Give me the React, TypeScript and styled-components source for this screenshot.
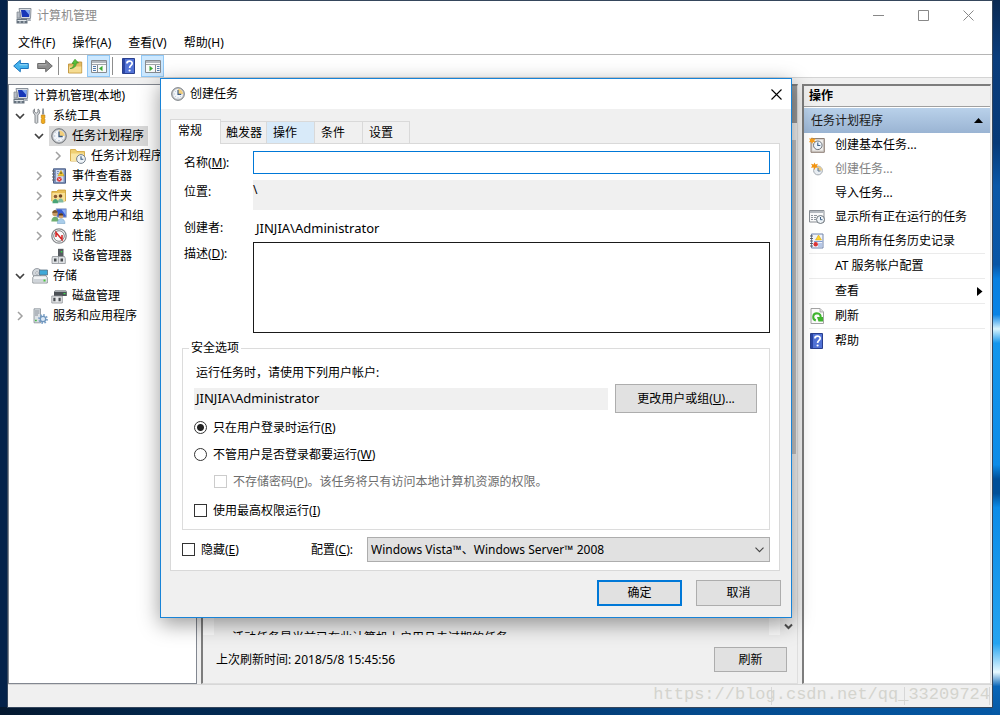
import React, { useState } from "react";
import styled, { createGlobalStyle, css } from "styled-components";

const GlobalStyle = createGlobalStyle`
  * { box-sizing: border-box; }
  body {
    margin: 0;
    font-family: "Noto Sans", "Noto Sans CJK SC", sans-serif;
    font-size: 12px;
    line-height: 16px;
    color: #000;
  }
  button, input, textarea, select {
    font: inherit;
    color: inherit;
    margin: 0;
    padding: 0;
    border-radius: 0;
    outline: none;
  }
  svg { display: block; flex: none; }
`;

/* ---------- desktop and main window ---------- */

const Desktop = styled.div`
  position: relative;
  display: flex;
  min-height: 100vh;
  padding: 1px 8px 8px;
  overflow: hidden;
  background:
    linear-gradient(#0b2a52 0%, #0a3d7c 8%, #073a78 20%, #0b58a8 26%, #0a56a6 37%, #0a80e0 39%, #0a84e6 44%,
      #d8f4fc 46%, #1496ec 48%, #0c8ce8 65%, #004f98 67%, #004f98 69%, #0c8ce8 71%, #25a4f0 90%, #e8faff 94%, #0a66b8 96%, #0558a4 100%)
      right top / 8px 100% no-repeat,
    linear-gradient(90deg, #04182f 0%, #02284f 18%, #032f5e 45%, #044a8c 70%, #0558a4 100%) left bottom / 100% 8px no-repeat,
    #04224a;
`;

const MainWindow = styled.main`
  display: flex;
  flex: 1;
  flex-direction: column;
  min-width: 0;
  background: #f0f0f0;
  box-shadow: 0 0 0 1px #35465c;
`;

const TitleBar = styled.header`
  display: flex;
  align-items: center;
  height: 29px;
  padding-left: 8px;
  gap: 5px;
  background: #fff;
  color: #8b8b8b;
`;

const Title = styled.h1`
  flex: 1;
  margin: 0;
  font-size: 12px;
  font-weight: 400;
`;

const CaptionButton = styled.button<{ $width?: number }>`
  display: flex;
  align-items: center;
  justify-content: center;
  width: ${(p) => p.$width ?? 40}px;
  height: 29px;
  border: 0;
  background: transparent;
`;

const CaptionButtons = styled.div`
  display: flex;
  gap: 5px;
  padding-right: 4px;
`;

const MenuBar = styled.nav`
  display: flex;
  gap: 17px;
  height: 25px;
  padding: 2px 10px 0;
  background: #fff;
  border-bottom: 1px solid #b5b5b5;
`;

const MenuButton = styled.button`
  border: 0;
  background: transparent;
`;

const Toolbar = styled.div`
  display: flex;
  align-items: center;
  gap: 1px;
  height: 23px;
  padding-left: 1px;
  background: #fff;
  border-bottom: 1px solid #d4d4d4;
`;

const ToolButton = styled.button<{ $active?: boolean }>`
  display: flex;
  align-items: center;
  justify-content: center;
  width: 23px;
  height: 22px;
  border: 1px solid ${(p) => (p.$active ? "#90c8f6" : "transparent")};
  background: ${(p) => (p.$active ? "#cce8ff" : "transparent")};
`;

const ToolSeparator = styled.span`
  width: 1px;
  height: 18px;
  margin: 0 3px 0 1px;
  background: #8d8d8d;
`;

const Workspace = styled.div`
  display: flex;
  flex: 1;
  min-height: 0;
  padding: 6px 1px 0 0;
  gap: 4px;
`;

const StatusBar = styled.footer`
  position: relative;
  display: flex;
  justify-content: flex-end;
  height: 23px;
  padding: 2px 2px 2px 0;
  border-top: 1px solid #d7d7d7;
`;

const StatusCell = styled.span<{ $width: number }>`
  width: ${(p) => p.$width}px;
  border-right: 1px solid #d7d7d7;
`;

const Watermark = styled.span`
  position: absolute;
  right: 2px;
  top: 0;
  font-family: "Liberation Mono", monospace;
  font-size: 17px;
  line-height: 20px;
  color: #d4d4ce;
`;

/* ---------- console tree ---------- */

const TreePane = styled.aside`
  width: 189px;
  overflow: hidden;
  padding-top: 1px;
  background: #fff;
  border: 1px solid #828790;
`;

const TreeList = styled.ul`
  margin: 0;
  padding: 0;
  list-style: none;
`;

const TreeRow = styled.li<{ $level: number }>`
  display: flex;
  align-items: center;
  height: 20px;
  padding-left: ${(p) => (p.$level === 0 ? 4 : p.$level * 19 - 14)}px;
  white-space: nowrap;
`;

const Twisty = styled.span`
  display: flex;
  justify-content: center;
  width: 12px;
  margin-right: 6px;
`;

const TreeLabel = styled.span<{ $selected?: boolean }>`
  display: flex;
  align-items: center;
  gap: 5px;
  height: 20px;
  padding: 0 4px 0 2px;
  margin-left: -2px;
  background: ${(p) => (p.$selected ? "#d9d9d9" : "transparent")};
`;

/* ---------- middle pane ---------- */

const sunken = css`
  border: solid;
  border-width: 2px 1px 1px 2px;
  border-color: #7d7d7d #dedede #dedede #7d7d7d;
`;

const SummaryPane = styled.section`
  ${sunken}
  display: flex;
  flex: 1;
  flex-direction: column;
  min-width: 0;
`;

const SummaryHeader = styled.div`
  height: 37px;
  background: #999;
`;

const SummaryScroller = styled.div`
  display: flex;
  flex: 1;
  min-height: 0;
`;

const SummaryCard = styled.div`
  display: flex;
  flex: 1;
  flex-direction: column;
  justify-content: flex-end;
  min-width: 0;
  padding: 0 0 0 18px;
  border: solid #fbfbfb;
  border-width: 0 11px;
`;

const CutLine = styled.p`
  height: 4px;
  margin: 0;
  overflow: hidden;
  line-height: 14px;
  white-space: nowrap;
`;

const ScrollTrack = styled.div`
  display: flex;
  flex-direction: column;
  align-items: center;
  width: 17px;
  padding: 17px 0 4px;
`;

const ScrollThumb = styled.div`
  width: 14px;
  height: 64%;
  margin-bottom: auto;
  background: #c4c4c4;
`;

const SummaryFooter = styled.div`
  display: flex;
  align-items: center;
  justify-content: space-between;
  height: 48px;
  padding: 1px 10px 0 13px;
`;

/* ---------- actions pane ---------- */

const ActionsPane = styled.aside`
  ${sunken}
  width: 189px;
  background: #fff;
`;

const ActionsTitle = styled.h2`
  height: 21px;
  margin: 0 0 1px;
  padding-left: 5px;
  font-size: 12px;
  font-weight: 600;
  line-height: 20px;
  background: #f0f0f0;
  border-bottom: 1px solid #a0a0a0;
`;

const ActionsGroup = styled.h3`
  display: flex;
  align-items: center;
  justify-content: space-between;
  height: 25px;
  margin: 0;
  padding: 0 7px;
  font-size: 12px;
  font-weight: 400;
  color: #1a1a1a;
  background: linear-gradient(#b9d1ea, #9ab4d3);
`;

const ActionsList = styled.ul`
  margin: 0;
  padding: 0 5px;
  list-style: none;
`;

const ActionItem = styled.li<{ $ruled?: boolean }>`
  border-bottom: ${(p) => (p.$ruled ? "1px solid #ebebeb" : "0")};
`;

const ActionButton = styled.button`
  display: flex;
  align-items: center;
  width: 100%;
  height: 24px;
  border: 0;
  background: transparent;
  text-align: left;
  white-space: nowrap;
  &:disabled { color: #838383; }
`;

const ActionIcon = styled.span`
  width: 26px;
`;

const ActionText = styled.span`
  flex: 1;
`;

/* ---------- dialog ---------- */

const Dialog = styled.section`
  position: absolute;
  top: 78px;
  left: 160px;
  right: 208px;
  background: #f0f0f0;
  border: 1px solid #1883d7;
  box-shadow: 0 6px 20px rgba(0, 0, 0, 0.4);
`;

const DialogTitleBar = styled.header`
  display: flex;
  align-items: center;
  gap: 5px;
  height: 30px;
  padding-left: 10px;
  background: #fff;
`;

const DialogBody = styled.form`
  padding: 10px 10px 11px 9px;
`;

const TabList = styled.div`
  display: flex;
  align-items: flex-end;
  height: 24px;
`;

const Tab = styled.button<{ $width: number; $hot?: boolean }>`
  width: ${(p) => p.$width}px;
  height: 22px;
  padding: 0 0 0 ${(p) => (p.$width > 46 ? 6 : 5)}px;
  border: solid #d9d9d9;
  border-width: 1px 1px 0 0;
  background: ${(p) => (p.$hot ? "#d8eaf9" : "#f0f0f0")};
  text-align: left;
  white-space: nowrap;
  &[aria-selected="true"] {
    height: 25px;
    margin-bottom: -1px;
    padding: 0 0 2px 7px;
    border-left-width: 1px;
    background: #fff;
  }
`;

const TabPanel = styled.div`
  margin-right: 1px;
  padding: 7px 9px 8px 11px;
  background: #fff;
  border: 1px solid #d9d9d9;
`;

const Fields = styled.div`
  display: grid;
  grid-template-columns: 69px 1fr;
  gap: 6px 0;
  padding-left: 2px;
`;

const FieldLabel = styled.label`
  padding-top: 4px;
`;

const NameInput = styled.input`
  height: 23px;
  padding: 0 3px;
  border: 1px solid #0078d7;
  background: #fff;
`;

const ReadonlyBox = styled.output`
  height: 30px;
  padding: 2px 0;
  background: #f0f0f0;
`;

const CreatorText = styled.output`
  height: 20px;
  padding: 4px 3px 0;
  font-size: 13px;
`;

const DescriptionArea = styled.textarea`
  display: block;
  height: 91px;
  padding: 3px;
  border: 1px solid #1a1a1a;
  background: #fff;
  resize: none;
`;

const SecurityGroup = styled.fieldset`
  min-width: 0;
  margin: 7px 0;
  padding: 9px 12px 5px 11px;
  border: 1px solid #dcdcdc;
`;

const GroupLegend = styled.legend`
  margin-left: -5px;
  padding: 0 2px;
`;

const GroupText = styled.p`
  margin: 0;
  padding-left: 2px;
`;

const AccountRow = styled.div`
  display: flex;
  align-items: center;
  gap: 7px;
  margin: 3px 0 1px;
`;

const AccountBox = styled.output`
  flex: 1;
  height: 22px;
  padding: 2px 2px;
  font-size: 13px;
  background: #f0f0f0;
`;

const PushButton = styled.button<{ $width: number; $height: number; $primary?: boolean }>`
  width: ${(p) => p.$width}px;
  height: ${(p) => p.$height}px;
  border: ${(p) => (p.$primary ? "2px solid #0078d7" : "1px solid #adadad")};
  background: #e1e1e1;
  white-space: nowrap;
`;

const Choice = styled.label<{ $nested?: boolean; $muted?: boolean }>`
  display: flex;
  align-items: center;
  gap: 6px;
  height: 27px;
  padding-left: ${(p) => (p.$nested ? 20 : 0)}px;
  color: ${(p) => (p.$muted ? "#6d6d6d" : "#000")};
  white-space: nowrap;
`;

const LastChoice = styled(Choice)`
  margin-top: 2px;
`;

const HideChoice = styled(Choice)`
  height: 25px;
`;

const Radio = styled.input.attrs({ type: "radio" })`
  appearance: none;
  width: 13px;
  height: 13px;
  border: 1px solid #333;
  border-radius: 50%;
  background: #fff;
  &:checked { background: radial-gradient(circle, #222 0 3px, #fff 4px); }
`;

const CheckBox = styled.input.attrs({ type: "checkbox" })`
  appearance: none;
  width: 13px;
  height: 13px;
  border: 1px solid #333;
  background: #fff;
  &:disabled { border-color: #ccc; }
  &:checked { background: linear-gradient(#333, #333) center / 7px 7px no-repeat; }
`;

const ConfigureRow = styled.div`
  display: grid;
  grid-template-columns: 129px 56px 1fr;
  align-items: center;
`;

const SelectFrame = styled.div`
  display: grid;
  grid-template-columns: 1fr 15px;
  align-items: center;
`;

const ConfigSelect = styled.select`
  grid-area: 1 / 1 / 2 / 3;
  width: 100%;
  height: 25px;
  padding: 0 20px 0 3px;
  appearance: none;
  border: 1px solid #adadad;
  background: #e1e1e1;
`;

const SelectArrow = styled.span`
  grid-area: 1 / 2;
  pointer-events: none;
`;

const DialogButtons = styled.div`
  display: flex;
  justify-content: flex-end;
  gap: 14px;
  padding-top: 9px;
`;

/* ---------- icons ---------- */

const Icon = ({ size = 16, children }: { size?: number; children: React.ReactNode }) => (
  <svg width={size} height={size} viewBox="0 0 16 16" aria-hidden="true">{children}</svg>
);

const ComputerIcon = () => (
  <Icon>
    <path d="M3 .5h12l-.5 10H5z" fill="#d9dde2" stroke="#8a929c" />
    <path d="M5 2h8.6l-.4 7H6z" fill="#1737b8" />
    <path d="M9 2h4.6l-.3 5z" fill="#7fa8f0" />
    <path d="M1 4h3v6H1z" fill="#b8bec6" stroke="#7d858e" strokeWidth=".7" />
    <path d="M.5 10.5h11v5H.5z" fill="#66727e" />
    <path d="M1.500 12h9v1h-9z" fill="#e3e8ec" />
    <path d="M3 13.500h2v1H3zM7 13.500h2v1H7z" fill="#c9d2da" />
    <path d="M12 11h2.500l.5 2h-3z" fill="#a8afb8" />
  </Icon>
);

const ClockIcon = ({ size = 16 }: { size?: number }) => (
  <Icon size={size}>
    <circle cx="8" cy="8" r="7.300" fill="#b9bcc0" stroke="#74787d" strokeWidth="1" />
    <circle cx="8" cy="8" r="5.700" fill="#f3f6fa" stroke="#dfe3e7" strokeWidth=".6" />
    <path d="M8 8V2.300A5.700 5.700 0 0 1 13.700 8z" fill="#f2cf7c" />
    <path d="M8 3.500V8.500h3.700" fill="none" stroke="#3c5b80" strokeWidth="1.300" />
    <path d="M3.200 8h1M8 12v1M4.600 4.600l.6.6M4.600 11.400l.6-.6M11.400 11.400l-.6-.6" stroke="#7d94ad" strokeWidth=".8" />
  </Icon>
);

const ToolsIcon = () => (
  <Icon>
    <path d="M2.500 1v3l1.700 1.200L6 4V1c1.500.7 2 2.300 1.500 4L5.800 7v7.500c0 1-2.800 1-2.800 0V7L1.500 5C.9 3.300 1.300 1.700 2.500 1z" fill="#d4d7da" stroke="#7a7f85" strokeWidth=".9" />
    <path d="M10.300.5h1.600l.3 6H10z" fill="#8c9299" />
    <path d="M9.300 7h3.600v3l-.6.700.6.600v3.200c0 1.500-3.600 1.500-3.600 0v-3.200l.6-.6-.6-.7z" fill="#efab1e" stroke="#b9790a" strokeWidth=".6" />
  </Icon>
);

const FolderClockIcon = () => (
  <Icon>
    <path d="M.5 13V1.500h5l1.300 2h7.700V13z" fill="#efcf73" stroke="#cfa238" strokeWidth=".8" />
    <path d="M1 5.500h13V13H1z" fill="#f9e6a6" />
    <circle cx="11" cy="11" r="4.400" fill="#eef3f8" stroke="#74808d" />
    <path d="M11 8.300V11.300h2.300" fill="none" stroke="#35597f" strokeWidth="1.100" />
  </Icon>
);

const EventIcon = () => (
  <Icon>
    <path d="M2.500.8h12v14.400h-12z" fill="#7f93bd" stroke="#4b5f88" />
    <path d="M5 2h7.500v12H5z" fill="#cfdaee" />
    <path d="M6 3.500h2M6 5.500h1.500" stroke="#7f93bd" />
    <path d="M1 3h3M1 6h3M1 9h3M1 12h3" stroke="#666" />
    <path d="M10 2.500l3 5.300H7z" fill="#ffd52e" stroke="#c39308" strokeWidth=".6" />
    <path d="M10 4.200v2" stroke="#222" />
    <circle cx="8.300" cy="11.300" r="2.400" fill="#dc3434" />
    <path d="M7.400 10.400l1.800 1.800M9.200 10.400l-1.800 1.800" stroke="#fff" strokeWidth=".7" />
  </Icon>
);

const SharedIcon = () => (
  <Icon>
    <path d="M.8 13V3.500h5L7 2h7.500v11z" fill="#e9bf55" stroke="#c79a30" strokeWidth=".8" />
    <path d="M1.300 5h12.700v8H1.300z" fill="#f8df94" />
    <circle cx="4.500" cy="8.500" r="1.800" fill="#8b5a34" />
    <circle cx="9.500" cy="8" r="1.800" fill="#6f4423" />
    <path d="M1.500 15.200c0-5.500 5.800-5.500 5.800 0z" fill="#49a477" />
    <path d="M6.800 14.500c0-5.200 5.700-5.200 5.700 0z" fill="#7fb9a0" />
  </Icon>
);

const UsersIcon = () => (
  <Icon>
    <path d="M5 .8h10.300v8.500H6z" fill="#3659cf" stroke="#a8b4c9" />
    <path d="M10.500 1.500h4.300v6z" fill="#8badf3" />
    <circle cx="4" cy="5.500" r="2.700" fill="#c99a62" />
    <path d="M1.300 5c.2-3.800 5.200-3.800 5.300-.3z" fill="#7a552c" />
    <path d="M.3 13.500c0-6.500 7.500-6.500 7.500 0z" fill="#6fae70" />
    <circle cx="10" cy="8" r="2.400" fill="#d9a56d" />
    <path d="M7.600 7.500c.5-3 4.600-3 4.700 0z" fill="#55371b" />
    <path d="M6.300 15.500c0-6.500 7.700-6.500 7.700 0z" fill="#a9cdea" stroke="#6d9cc2" strokeWidth=".5" />
  </Icon>
);

const PerformanceIcon = () => (
  <Icon>
    <circle cx="8" cy="8" r="7.200" fill="#fff" stroke="#85888c" strokeWidth="1.300" />
    <circle cx="8" cy="8" r="5.300" fill="#f9f9f9" stroke="#5f6367" strokeWidth=".8" />
    <path d="M5 9V4.500l6 7V7" fill="none" stroke="#d42222" strokeWidth="1.500" />
  </Icon>
);

const DeviceIcon = () => (
  <Icon>
    <path d="M7 .8h5.500v8H7z" fill="#565b60" />
    <path d="M9.800 3h1.500v1.500H9.800z" fill="#36dd48" />
    <path d="M1.500 8.500h12l.8 2v5H1v-5z" fill="#dfe2e5" stroke="#8d9195" strokeWidth=".8" />
    <path d="M3 10.500h2.500v3H3zM9.500 10.500H12v3H9.500z" fill="#494d51" />
    <path d="M7.500 9v6" stroke="#a9adb1" />
  </Icon>
);

const StorageIcon = () => (
  <Icon>
    <circle cx="5" cy="5" r="4.500" fill="#d2d7dc" stroke="#858c93" strokeWidth=".8" />
    <circle cx="5" cy="5" r="1.300" fill="#fff" stroke="#858c93" strokeWidth=".6" />
    <path d="M7.500 2h8v5h-8z" fill="#3fa8d8" stroke="#5c7183" strokeWidth=".8" />
    <path d="M.8 9.500l1.500-1.800h11.700l1.300 1.800V15H.8z" fill="#f1f3f5" stroke="#767d84" strokeWidth=".8" />
    <path d="M1.500 11h13v3.300h-13z" fill="#cfd4d9" />
    <path d="M11.500 11.500h2v2h-2z" fill="#4bc63e" />
  </Icon>
);

const DiskIcon = () => (
  <Icon>
    <path d="M4 2.500h11l.8 1.500v4H3V4z" fill="#4b5055" />
    <path d="M4.500 2.500h10.500l.5 1.500H3.500z" fill="#a4a9ae" />
    <path d="M12.500 5h2v1.200h-2z" fill="#41dd50" />
    <path d="M.8 8h10.500v7H.8z" fill="#e6e8ea" stroke="#8d9195" strokeWidth=".8" />
    <path d="M2.300 9.800h2.200v3.400H2.300zM7.500 9.800h2.200v3.400H7.500z" fill="#494d51" />
  </Icon>
);

const ServicesIcon = () => (
  <Icon>
    <path d="M2 .8h6.500v14H2z" fill="#dce1e6" stroke="#828a92" strokeWidth=".8" />
    <path d="M3 3h4.500M3 5h4.500M3 7h3" stroke="#7d868f" strokeWidth=".9" />
    <path d="M3 12.500h1.800" stroke="#45b845" strokeWidth="1.300" />
    <circle cx="11" cy="11" r="4" fill="none" stroke="#7ba1c8" strokeWidth="1.800" strokeDasharray="1.600 1.500" />
    <circle cx="11" cy="11" r="2.700" fill="#dbe8f5" stroke="#6e95bd" strokeWidth="1.300" />
  </Icon>
);

const ArrowIcon = ({ forward }: { forward?: boolean }) => (
  <Icon>
    <path
      d={forward ? "M.7 5.500h8V2.200L15.300 8l-6.600 5.800v-3.300h-8z" : "M15.300 5.500h-8V2.200L.7 8l6.600 5.800v-3.300h8z"}
      fill={forward ? "#8e8e8e" : "#45b2ec"}
      stroke={forward ? "#686868" : "#1a74bd"}
    />
    <path d={forward ? "M1.500 6.800h8" : "M6.500 6.800h8"} stroke={forward ? "#b8b8b8" : "#a2dcf8"} />
  </Icon>
);

const FolderUpIcon = () => (
  <Icon>
    <path d="M1.500 15V6h4l1.200-2h8v11z" fill="#e3bb62" stroke="#c0933a" strokeWidth=".9" />
    <path d="M2 8.500h12.300v6H2z" fill="#f5dc92" />
    <path d="M3 10.500c2.500-.5 4-2 4-5H5L8 1.200 11.500 5H9.300c0 3.500-2.300 5.500-6.300 5.500z" fill="#58c03b" stroke="#2f8a20" strokeWidth=".6" />
  </Icon>
);

const PaneIcon = ({ right }: { right?: boolean }) => (
  <Icon>
    <path d="M.5 2.500h15v12H.5z" fill="#fafafa" stroke="#868b91" />
    <path d="M1 3h14v2H1z" fill="#b3b8be" />
    <path d="M1 6.500h14" stroke="#9fa4aa" />
    <path d={right ? "M10.500 7v7" : "M6.500 7v7"} stroke="#868b91" />
    <path d={right ? "M12 8.500h2.500M12 10.500h2.500M12 12.500h2.500" : "M2 8.500h3M2 10.500h3M2 12.500h3"} stroke="#4e79ad" />
    <path d={right ? "M4.500 7.800v5.400L8 10.500z" : "M11.500 7.800v5.400L8 10.500z"} fill="#3bab34" />
  </Icon>
);

const HelpIcon = () => (
  <Icon>
    <path d="M1.500.5h12v15h-12z" fill="#5273d6" stroke="#293f8e" />
    <path d="M2 1h2v14H2z" fill="#2b46a4" />
    <path d="M5.900 5.500C5.900 2.300 11.200 2.300 11.200 5.300c0 2.100-2.600 2.200-2.600 4.700" fill="none" stroke="#fff" strokeWidth="1.700" />
    <circle cx="8.600" cy="12.500" r="1.100" fill="#fff" />
  </Icon>
);

const NewBasicTaskIcon = () => (
  <Icon>
    <path d="M2 1.500h13.300v13.800H2z" fill="#d5d1ce" stroke="#8d7f76" />
    <path d="M3.500 3h10.300v10.500H3.500z" fill="#f3f1ef" />
    <circle cx="8.800" cy="8.300" r="4.300" fill="#eef4fa" stroke="#6d737b" />
    <path d="M8.800 5.500V8.500h2.500" fill="none" stroke="#3d6086" strokeWidth="1.100" />
    <path d="M3 0l.8 1.900L6.500 1.300 5.300 3.400 6.500 5.300 4.100 5 3 7l-.8-2L0 5.300l1.100-2L0 1.300l2.200.6z" fill="#f59d1b" />
  </Icon>
);

const NewTaskIcon = () => (
  <Icon>
    <circle cx="9" cy="9.500" r="4.400" fill="#e8edf2" stroke="#a5abb2" />
    <path d="M9 9.500V5.600A3.900 3.900 0 0 1 12.900 9.500z" fill="#edcb83" />
    <path d="M9 7v3h2.500" fill="none" stroke="#5d7792" />
    <path d="M5.500 1.500l.9 1.900 2.600-.6-1.200 2 1.200 2-2.600-.3-.9 2.500-.9-2.500-2.600.3 1.200-2-1.200-2 2.600.6z" fill="#f39410" />
  </Icon>
);

const RunningTasksIcon = () => (
  <Icon>
    <path d="M.5 1.500h14.500v11.500H.5z" fill="#fafafa" stroke="#8b9096" />
    <path d="M1 2h13.500v2H1z" fill="#b5bac0" />
    <path d="M2 6.500h2M5 6.500h3M2 8.500h2M5 8.500h2M2 10.500h2M5 10.500h2" stroke="#8f969d" />
    <circle cx="11.500" cy="10.500" r="4" fill="#eef3f7" stroke="#6f767d" />
    <path d="M11.500 8v2.700h2" fill="none" stroke="#3d6086" />
  </Icon>
);

const HistoryIcon = () => (
  <Icon>
    <path d="M2.500 1h11.500v14H2.500z" fill="#f0f4fb" stroke="#7286ad" />
    <path d="M1 3h3M1 5.500h3M1 8h3M1 10.500h3M1 13h3" stroke="#555" strokeWidth=".9" />
    <path d="M5 8.500h8.500M9 11h4M9 13h4" stroke="#7d9bd2" />
    <path d="M9.500 2l3 5h-6z" fill="#ffd42c" stroke="#cf9c10" strokeWidth=".5" />
    <circle cx="6.700" cy="11.300" r="2.200" fill="#db3434" />
  </Icon>
);

const RefreshIcon = () => (
  <Icon>
    <path d="M2 .5h9L14.500 4v11.500H2z" fill="#fbfbfb" stroke="#a3a3a3" />
    <path d="M11 .5V4h3.500" fill="#ddd" stroke="#a3a3a3" strokeWidth=".8" />
    <path d="M6.800 12.500C3 11.200 3.400 5.500 7.800 5.300c3.200 0 4.500 2.500 3.700 5" fill="none" stroke="#3fb42e" strokeWidth="2" />
    <path d="M8 9h6v4.500H9.500z" fill="#3fb42e" />
  </Icon>
);

const Chevron = ({ open }: { open?: boolean }) => (
  <svg width="10" height="10" viewBox="0 0 10 10" aria-hidden="true">
    <path
      d={open ? "M1 3l4 4 4-4" : "M3 1l4 4-4 4"}
      fill="none"
      stroke={open ? "#404040" : "#a0a0a0"}
      strokeWidth={open ? 1.7 : 1.5}
    />
  </svg>
);

/* ---------- data ---------- */

type Node = { label: string; level: number; icon: React.ReactNode; state?: "open" | "closed"; selected?: boolean };

const treeNodes: Node[] = [
  { label: "计算机管理(本地)", level: 0, icon: <ComputerIcon /> },
  { label: "系统工具", level: 1, icon: <ToolsIcon />, state: "open" },
  { label: "任务计划程序", level: 2, icon: <ClockIcon />, state: "open", selected: true },
  { label: "任务计划程序库", level: 3, icon: <FolderClockIcon />, state: "closed" },
  { label: "事件查看器", level: 2, icon: <EventIcon />, state: "closed" },
  { label: "共享文件夹", level: 2, icon: <SharedIcon />, state: "closed" },
  { label: "本地用户和组", level: 2, icon: <UsersIcon />, state: "closed" },
  { label: "性能", level: 2, icon: <PerformanceIcon />, state: "closed" },
  { label: "设备管理器", level: 2, icon: <DeviceIcon /> },
  { label: "存储", level: 1, icon: <StorageIcon />, state: "open" },
  { label: "磁盘管理", level: 2, icon: <DiskIcon /> },
  { label: "服务和应用程序", level: 1, icon: <ServicesIcon />, state: "closed" },
];

type Action = { label: string; icon?: React.ReactNode; disabled?: boolean; ruled?: boolean; submenu?: boolean };

const actions: Action[] = [
  { label: "创建基本任务...", icon: <NewBasicTaskIcon /> },
  { label: "创建任务...", icon: <NewTaskIcon />, disabled: true },
  { label: "导入任务..." },
  { label: "显示所有正在运行的任务", icon: <RunningTasksIcon /> },
  { label: "启用所有任务历史记录", icon: <HistoryIcon />, ruled: true },
  { label: "AT 服务帐户配置", ruled: true },
  { label: "查看", ruled: true, submenu: true },
  { label: "刷新", icon: <RefreshIcon />, ruled: true },
  { label: "帮助", icon: <HelpIcon /> },
];

const tabs = [
  { name: "常规", width: 51 },
  { name: "触发器", width: 46 },
  { name: "操作", width: 48 },
  { name: "条件", width: 48 },
  { name: "设置", width: 47 },
];

/* ---------- views ---------- */

const CreateTaskDialog = () => {
  const [tab, setTab] = useState("常规");
  return (
    <Dialog role="dialog" aria-label="创建任务">
      <DialogTitleBar>
        <ClockIcon size={14} />
        <Title as="h2">创建任务</Title>
        <CaptionButton type="button" $width={30} aria-label="关闭">
          <svg width="11" height="11" viewBox="0 0 11 11"><path d="M.5.5l10 10M10.500.5l-10 10" stroke="#000" strokeWidth="1.100" /></svg>
        </CaptionButton>
      </DialogTitleBar>
      <DialogBody onSubmit={(e) => e.preventDefault()}>
        <TabList role="tablist">
          {tabs.map(({ name, width }) => (
            <Tab
              key={name}
              type="button"
              role="tab"
              aria-selected={name === tab}
              $width={width}
              $hot={name === "操作"}
              onClick={() => setTab(name)}
            >
              {name}
            </Tab>
          ))}
        </TabList>
        <TabPanel role="tabpanel">
          <Fields>
            <FieldLabel htmlFor="name">名称(<u>M</u>):</FieldLabel>
            <NameInput id="name" type="text" />
            <FieldLabel htmlFor="location">位置:</FieldLabel>
            <ReadonlyBox id="location">\</ReadonlyBox>
            <FieldLabel htmlFor="creator">创建者:</FieldLabel>
            <CreatorText id="creator">JINJIA\Administrator</CreatorText>
            <FieldLabel htmlFor="description">描述(<u>D</u>):</FieldLabel>
            <DescriptionArea id="description" />
          </Fields>
          <SecurityGroup>
            <GroupLegend>安全选项</GroupLegend>
            <GroupText>运行任务时，请使用下列用户帐户:</GroupText>
            <AccountRow>
              <AccountBox>JINJIA\Administrator</AccountBox>
              <PushButton type="button" $width={142} $height={29}>更改用户或组(<u>U</u>)...</PushButton>
            </AccountRow>
            <Choice>
              <Radio name="run" defaultChecked />
              <span>只在用户登录时运行(<u>R</u>)</span>
            </Choice>
            <Choice>
              <Radio name="run" />
              <span>不管用户是否登录都要运行(<u>W</u>)</span>
            </Choice>
            <Choice $nested $muted>
              <CheckBox disabled />
              <span>不存储密码(<u>P</u>)。该任务将只有访问本地计算机资源的权限。</span>
            </Choice>
            <LastChoice>
              <CheckBox />
              <span>使用最高权限运行(<u>I</u>)</span>
            </LastChoice>
          </SecurityGroup>
          <ConfigureRow>
            <HideChoice>
              <CheckBox />
              <span>隐藏(<u>E</u>)</span>
            </HideChoice>
            <label htmlFor="configure">配置(<u>C</u>):</label>
            <SelectFrame>
              <ConfigSelect id="configure">
                <option>Windows Vista™、Windows Server™ 2008</option>
              </ConfigSelect>
              <SelectArrow>
                <svg width="9" height="6" viewBox="0 0 9 6"><path d="M.5.7l4 4 4-4" fill="none" stroke="#444" strokeWidth="1.100" /></svg>
              </SelectArrow>
            </SelectFrame>
          </ConfigureRow>
        </TabPanel>
        <DialogButtons>
          <PushButton type="submit" $width={85} $height={26} $primary>确定</PushButton>
          <PushButton type="button" $width={85} $height={26}>取消</PushButton>
        </DialogButtons>
      </DialogBody>
    </Dialog>
  );
};

export default function App() {
  return (
    <>
      <GlobalStyle />
      <Desktop>
        <MainWindow>
          <TitleBar>
            <ComputerIcon />
            <Title>计算机管理</Title>
            <CaptionButtons>
              <CaptionButton aria-label="最小化">
                <svg width="11" height="11" viewBox="0 0 11 11"><path d="M0 5.500h11" stroke="#888" /></svg>
              </CaptionButton>
              <CaptionButton aria-label="最大化">
                <svg width="11" height="11" viewBox="0 0 11 11"><path d="M.5.5h10v10H.5z" fill="none" stroke="#888" /></svg>
              </CaptionButton>
              <CaptionButton aria-label="关闭">
                <svg width="11" height="11" viewBox="0 0 11 11"><path d="M.5.5l10 10M10.500.5l-10 10" stroke="#888" /></svg>
              </CaptionButton>
            </CaptionButtons>
          </TitleBar>
          <MenuBar>
            {["文件(F)", "操作(A)", "查看(V)", "帮助(H)"].map((m) => (
              <MenuButton key={m}>{m}</MenuButton>
            ))}
          </MenuBar>
          <Toolbar>
            <ToolButton aria-label="后退"><ArrowIcon /></ToolButton>
            <ToolButton aria-label="前进"><ArrowIcon forward /></ToolButton>
            <ToolSeparator />
            <ToolButton aria-label="上一级"><FolderUpIcon /></ToolButton>
            <ToolButton $active aria-label="显示控制台树"><PaneIcon /></ToolButton>
            <ToolSeparator />
            <ToolButton aria-label="帮助"><HelpIcon /></ToolButton>
            <ToolButton $active aria-label="显示操作窗格"><PaneIcon right /></ToolButton>
          </Toolbar>
          <Workspace>
            <TreePane>
              <TreeList>
                {treeNodes.map((n) => (
                  <TreeRow key={n.label} $level={n.level}>
                    {n.level > 0 && <Twisty>{n.state && <Chevron open={n.state === "open"} />}</Twisty>}
                    <TreeLabel $selected={n.selected}>
                      {n.icon}
                      {n.label}
                    </TreeLabel>
                  </TreeRow>
                ))}
              </TreeList>
            </TreePane>
            <SummaryPane>
              <SummaryHeader />
              <SummaryScroller>
                <SummaryCard>
                  <CutLine>活动任务是当前已在此计算机上启用且未过期的任务</CutLine>
                </SummaryCard>
                <ScrollTrack>
                  <ScrollThumb />
                  <svg width="9" height="8" viewBox="0 0 9 8"><path d="M1 1.500l3.500 3.500L8 1.500" fill="none" stroke="#505050" strokeWidth="2" /></svg>
                </ScrollTrack>
              </SummaryScroller>
              <SummaryFooter>
                <span>上次刷新时间: 2018/5/8 15:45:56</span>
                <PushButton $width={73} $height={25}>刷新</PushButton>
              </SummaryFooter>
            </SummaryPane>
            <ActionsPane>
              <ActionsTitle>操作</ActionsTitle>
              <ActionsGroup>
                任务计划程序
                <svg width="9" height="5" viewBox="0 0 9 5"><path d="M0 5L4.500 0 9 5z" /></svg>
              </ActionsGroup>
              <ActionsList>
                {actions.map((a) => (
                  <ActionItem key={a.label} $ruled={a.ruled}>
                    <ActionButton disabled={a.disabled}>
                      <ActionIcon>{a.icon}</ActionIcon>
                      <ActionText>{a.label}</ActionText>
                      {a.submenu && (
                        <svg width="8" height="9" viewBox="0 0 8 9"><path d="M0 0l5.500 4.500L0 9z" /></svg>
                      )}
                    </ActionButton>
                  </ActionItem>
                ))}
              </ActionsList>
            </ActionsPane>
          </Workspace>
          <StatusBar>
            <StatusCell $width={133} />
            <StatusCell $width={133} />
            <StatusCell $width={85} />
            <Watermark>https://blog.csdn.net/qq_33209724</Watermark>
          </StatusBar>
        </MainWindow>
        <CreateTaskDialog />
      </Desktop>
    </>
  );
}
